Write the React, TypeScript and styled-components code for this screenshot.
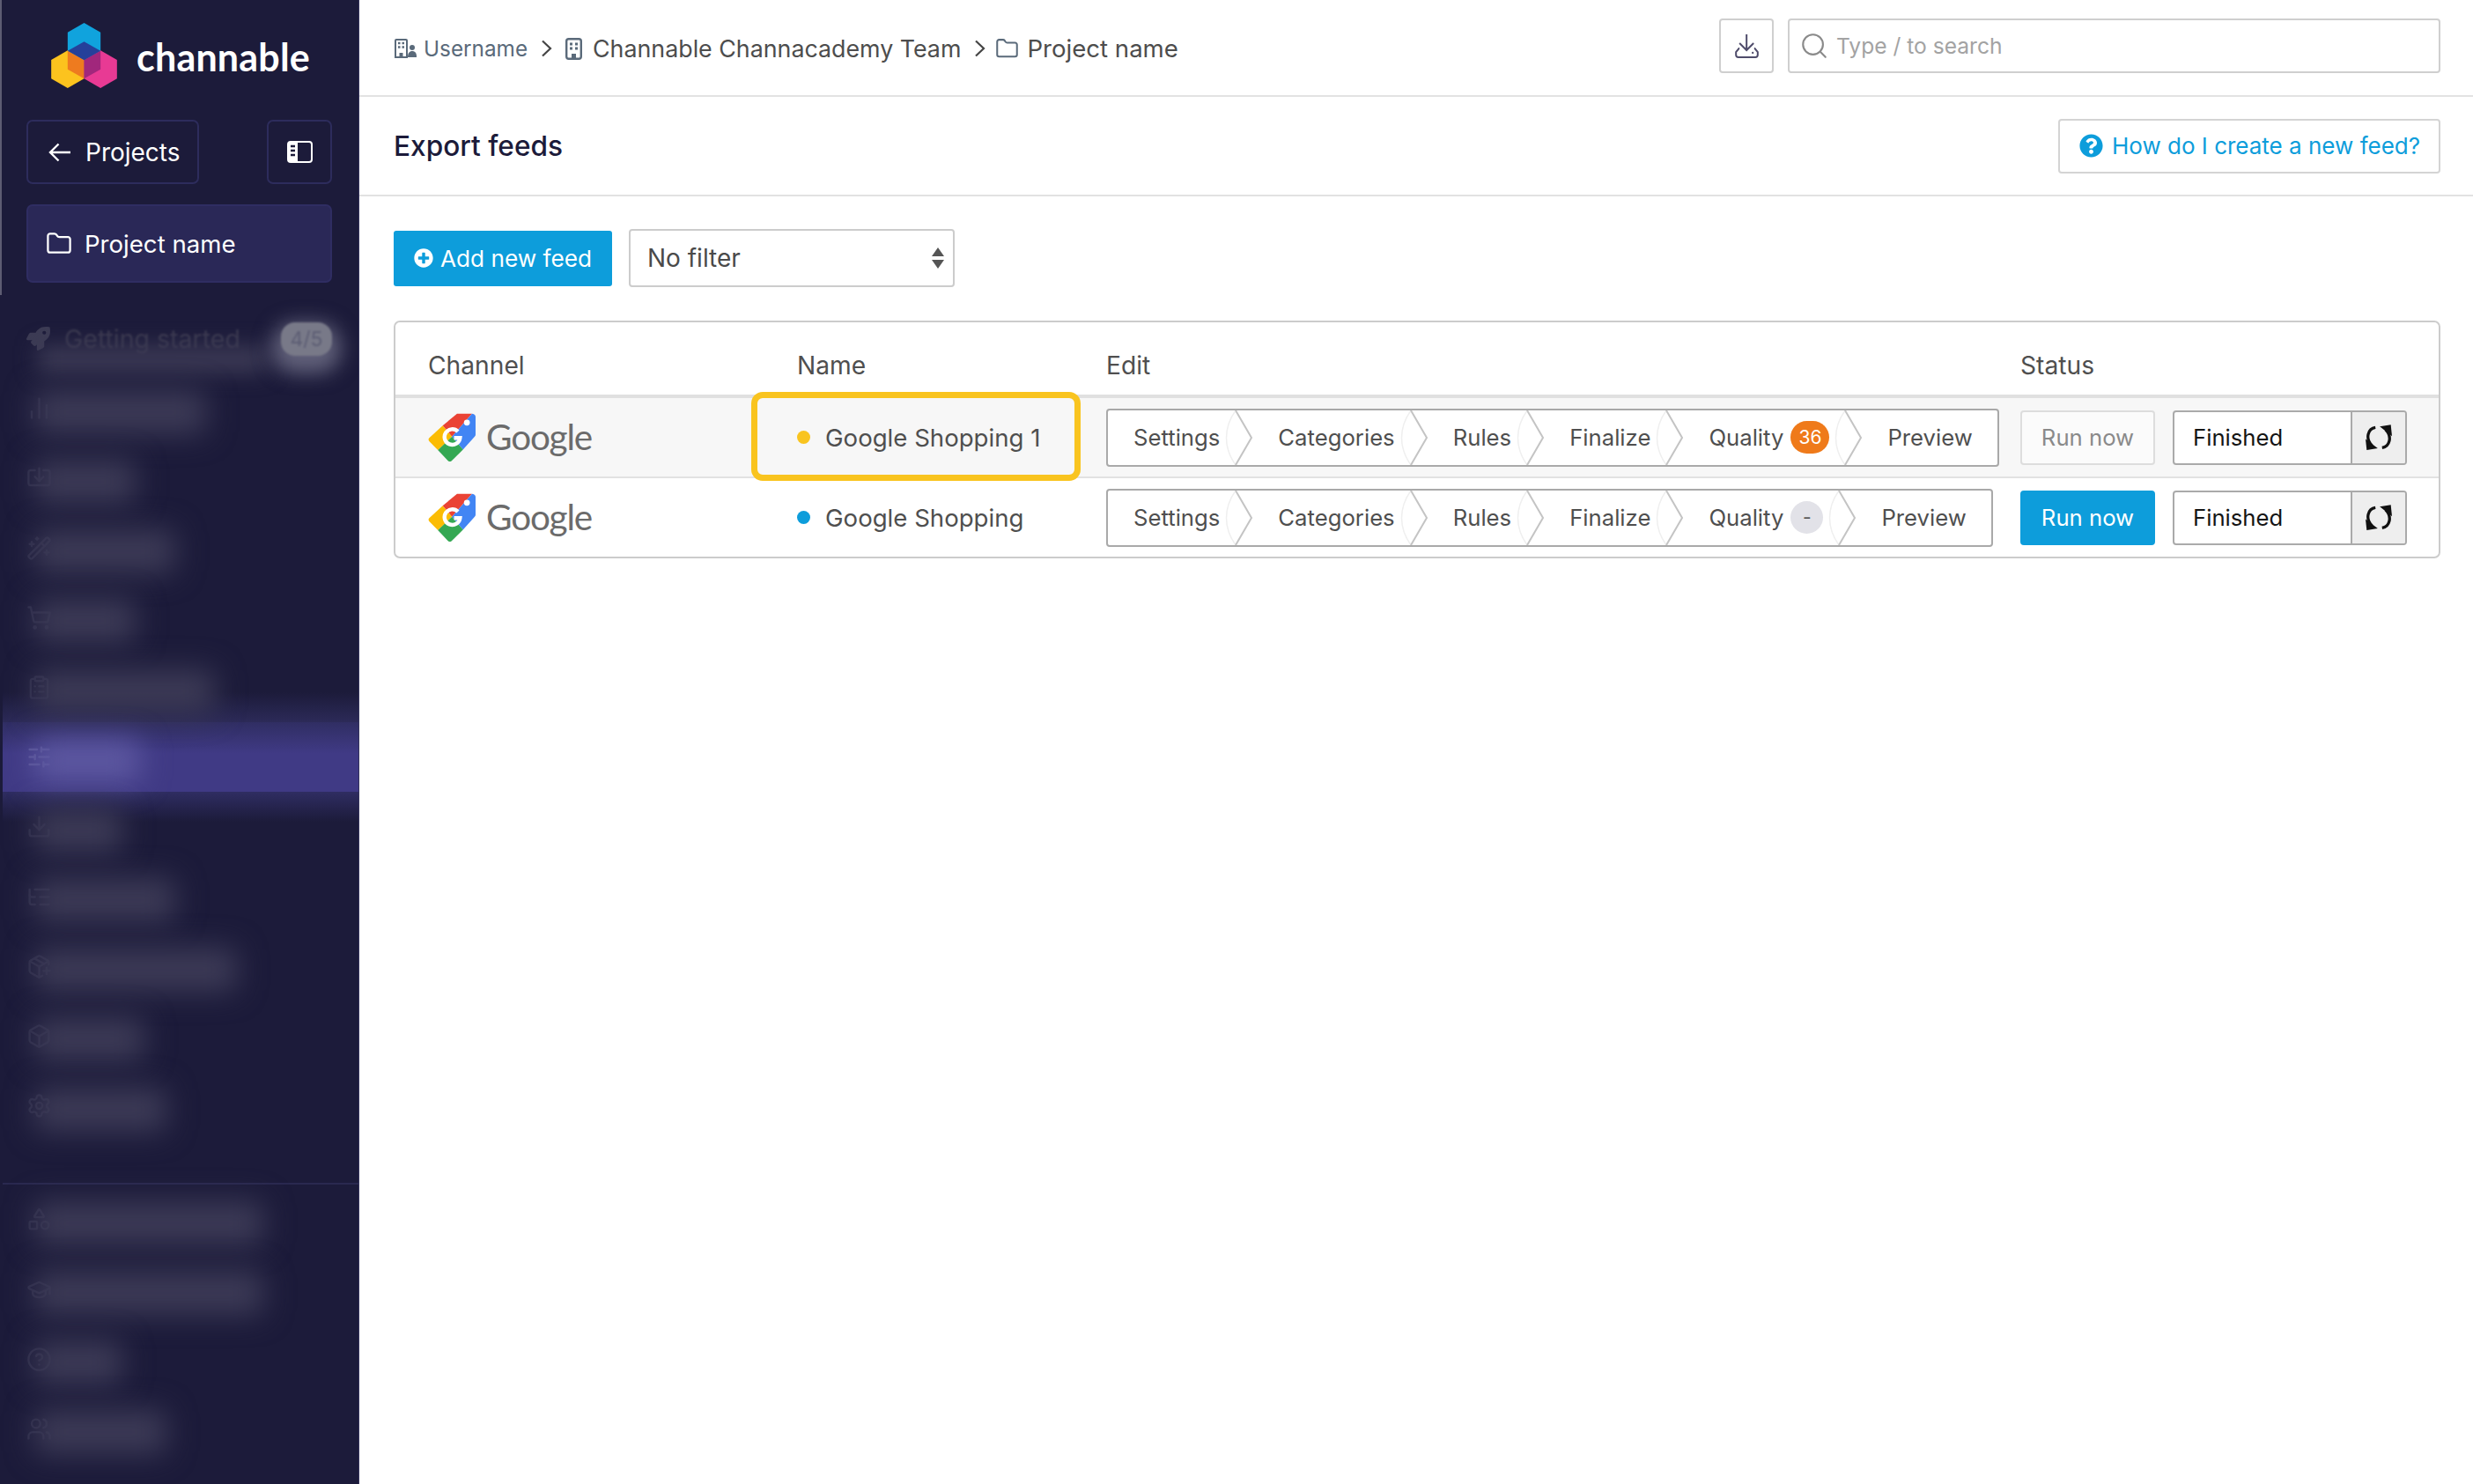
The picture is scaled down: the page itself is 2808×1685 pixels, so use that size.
import React from "react";
import styled, { createGlobalStyle } from "styled-components";
import {
  BarChart2,
  Box,
  ClipboardList,
  GraduationCap,
  HelpCircle,
  Search,
  Settings as Cog,
  Shapes,
  ShoppingCart,
  SlidersHorizontal,
  Download,
  PackagePlus,
  Users,
  WandSparkles,
  ListTree,
  Import,
} from "lucide-react";
import { FaPlusCircle, FaQuestionCircle, FaRocket } from "react-icons/fa";

const GlobalStyle = createGlobalStyle`
  html, body {
    margin: 0;
    padding: 0;
    background: #fff;
  }
  body {
    font-family: Inter, "Liberation Sans", sans-serif;
    font-size: 27.6px;
    color: #4a4a4a;
  }
  * {
    box-sizing: border-box;
  }
`;

const Page = styled.div`
  display: flex;
  width: 2808px;
  height: 1685px;
  overflow: hidden;
`;

/* sidebar */
const Sidebar = styled.aside`
  flex: 0 0 408px;
  display: flex;
  flex-direction: column;
  background: #1c1b3a;
  color: #fff;
  overflow: hidden;
  border-right: 1px solid #34335c;
`;

const SidebarTop = styled.div`
  height: 335px;
  padding: 26px 30px 0 28px;
  border-left: 2px solid #5d5c72;
`;

const Brand = styled.div`
  display: flex;
  align-items: center;
  gap: 22px;
  margin-left: 28px;
  height: 74px;
`;

const BrandName = styled.span`
  font-family: Lato, sans-serif;
  font-size: 43px;
  font-weight: 700;
  letter-spacing: 0.2px;
  margin-top: 2px;
`;

const ProjectsRow = styled.div`
  display: flex;
  justify-content: space-between;
  margin-top: 36px;
`;

const SideButton = styled.div<{ $width: number }>`
  width: ${(p) => p.$width}px;
  height: 73px;
  display: flex;
  align-items: center;
  justify-content: ${(p) => (p.$width < 100 ? "center" : "flex-start")};
  gap: 16px;
  padding-left: ${(p) => (p.$width < 100 ? 0 : 23)}px;
  border: 2px solid #2d2c5c;
  border-radius: 7px;
  font-size: 28px;
`;

const CurrentProject = styled.div`
  height: 89px;
  margin-top: 23px;
  display: flex;
  align-items: center;
  gap: 15px;
  padding-left: 21px;
  background: #2a2857;
  border: 2px solid #2f2d62;
  border-radius: 7px;
`;

const NavList = styled.nav`
  display: flex;
  flex-direction: column;
  padding-top: 10px;
`;

const SecondNavList = styled(NavList)`
  padding-top: 0;
`;

const NavDivider = styled.div`
  height: 2px;
  margin: 48px 0 0 3px;
  background: #2a2950;
`;

const NavRow = styled.div<{ $active?: boolean }>`
  position: relative;
  height: 79.2px;
  display: flex;
  align-items: center;
  padding-left: 30px;
  color: #2f2e4c;
  ${(p) =>
    p.$active &&
    `
    margin-left: 3px;
    padding-left: 27px;
    color: #5b5799;
    background: linear-gradient(#302e63, #403a85 45%, #403a85);
    &::before, &::after {
      content: "";
      position: absolute;
      left: 0;
      right: 0;
      height: 34px;
    }
    &::before {
      bottom: 100%;
      background: linear-gradient(transparent, #2c2a58);
    }
    &::after {
      top: 100%;
      background: linear-gradient(#2f2d62, transparent);
    }
  `}
`;

const BlurBar = styled.span<{ $width: number; $active?: boolean }>`
  position: relative;
  z-index: 1;
  width: ${(p) => p.$width}px;
  height: 50px;
  margin: 8px 0 0 -20px;
  background: ${(p) => (p.$active ? "#5c57a0" : "#3c3a56")};
  border-radius: 8px;
  filter: blur(16px);
`;

const GettingStartedRow = styled(NavRow)`
  color: #3c3b54;
  gap: 16px;
  padding-right: 30px;
`;

const GettingLabel = styled.span`
  position: relative;
  flex: 1;
  font-size: 28.500px;
  color: #3a394f;
  filter: blur(1.3px);
  &::after {
    content: "";
    position: absolute;
    left: -30px;
    right: 0;
    top: 26px;
    height: 30px;
    background: #3c3a55;
    filter: blur(12px);
  }
`;

const ProgressBadge = styled.span`
  width: 58px;
  height: 38px;
  display: flex;
  align-items: center;
  justify-content: center;
  font-size: 23px;
  color: #5d5e74;
  background: #787988;
  border-radius: 16px;
  box-shadow: 0 10px 22px 10px rgba(165, 165, 185, 0.5);
  filter: blur(1.2px);
`;

/* main */
const Main = styled.main`
  flex: 1;
  display: flex;
  flex-direction: column;
  min-width: 0;
`;

const TopBar = styled.header`
  height: 110px;
  flex: none;
  display: flex;
  align-items: center;
  justify-content: space-between;
  padding: 0 37px 4px 39px;
  border-bottom: 2px solid #e2e2e2;
`;

const Breadcrumb = styled.div`
  display: flex;
  align-items: center;
  margin-top: 6px;
`;

const Crumb = styled.span<{ $muted?: boolean; $gap: number }>`
  display: flex;
  align-items: center;
  gap: ${(p) => p.$gap}px;
  font-size: ${(p) => (p.$muted ? 24.3 : 26.8)}px;
  color: ${(p) => (p.$muted ? "#5a6a7a" : "#4d4d4d")};
  white-space: nowrap;
`;

const CrumbArrow = styled.svg`
  flex: none;
  width: 13px;
  height: 20px;
  margin: 0 15px;
`;

const CrumbProject = styled(Crumb)`
  margin-left: -3px;
  font-size: 27.6px;
`;

const TopActions = styled.div`
  display: flex;
  gap: 16px;
`;

const IconBox = styled.div`
  width: 62px;
  height: 62px;
  display: flex;
  align-items: center;
  justify-content: center;
  border: 2px solid #cfcfcf;
  border-radius: 4px;
  color: #4f4c6b;
`;

const SearchBox = styled.div`
  width: 741px;
  height: 62px;
  display: flex;
  align-items: center;
  gap: 8px;
  padding-left: 11px;
  border: 2px solid #cfcfcf;
  border-radius: 4px;
  font-size: 24.6px;
  color: #a3a3a3;
`;

const SectionHeader = styled.div`
  height: 113px;
  flex: none;
  display: flex;
  align-items: center;
  justify-content: space-between;
  padding: 0 37px 0 39px;
  border-bottom: 2px solid #e2e2e2;
`;

const Title = styled.h1`
  margin: 0;
  font-size: 31.6px;
  font-weight: 500;
  color: #1c1b3a;
`;

const HelpButton = styled.a`
  width: 434px;
  height: 62px;
  display: flex;
  align-items: center;
  gap: 10px;
  padding-left: 22px;
  border: 2px solid #d4d4d4;
  border-radius: 4px;
  font-size: 26px;
  color: #0d9ddb;
  white-space: nowrap;
`;

const Content = styled.div`
  padding: 37px 37px 0 39px;
`;

const Toolbar = styled.div`
  display: flex;
  align-items: center;
  gap: 19px;
`;

const AddButton = styled.button`
  width: 248px;
  height: 63px;
  display: flex;
  align-items: center;
  gap: 8px;
  padding: 0 0 0 23px;
  border: 0;
  border-radius: 3px;
  background: #0d9ddb;
  font: inherit;
  font-size: 26.2px;
  color: #fff;
  white-space: nowrap;
`;

const FilterSelect = styled.div`
  width: 370px;
  height: 66px;
  display: flex;
  align-items: center;
  justify-content: space-between;
  padding: 0 9px 0 19px;
  border: 2px solid #cccccc;
  border-radius: 4px;
  font-size: 28px;
  color: #4a4a4a;
`;

const FeedTable = styled.div`
  margin-top: 38px;
  border: 2px solid #cccccc;
  border-radius: 7px;
`;

const TableRow = styled.div<{ $shaded?: boolean }>`
  display: grid;
  grid-template-columns: 456px 351px 1038px 1fr;
  align-items: center;
  height: ${(p) => (p.$shaded ? 91 : 89)}px;
  color: #4f4f4f;
  background: ${(p) => (p.$shaded ? "#f7f7f7" : "transparent")};
  ${(p) => p.$shaded && "border-bottom: 2px solid #e2e2e2;"}
`;

const TableHead = styled(TableRow)`
  height: 86px;
  padding-top: 16px;
  border-bottom: 4px solid #e0e0e0;
  font-size: 28.200px;
`;

const ChannelCell = styled.div`
  display: flex;
  align-items: center;
  gap: 12px;
  padding-left: 37px;
`;

const GoogleWord = styled.span`
  font-family: Lato, sans-serif;
  font-size: 40.500px;
  letter-spacing: -1.2px;
  color: #6b6b6b;
  margin-top: -2px;
`;

const NameCell = styled.div<{ $highlight?: boolean }>`
  position: relative;
  display: flex;
  align-items: center;
  gap: 17px;
  height: 100%;
  ${(p) =>
    p.$highlight &&
    `
    &::after {
      content: "";
      box-sizing: border-box;
      position: absolute;
      left: -52px;
      top: -7px;
      width: 374px;
      height: 101px;
      border: 7px solid #f9c41f;
      border-radius: 13px;
    }
  `}
`;

const StatusDot = styled.span<{ $color: string }>`
  width: 15px;
  height: 15px;
  border-radius: 50%;
  background: ${(p) => p.$color};
`;

const Stepper = styled.div`
  display: inline-flex;
  align-items: center;
  width: max-content;
  height: 66px;
  background: #fff;
  border: 2px solid #a9a9a9;
  border-radius: 4px;
`;

const Step = styled.span<{ $first?: boolean; $last?: boolean }>`
  display: flex;
  align-items: center;
  gap: 8px;
  padding: 0 ${(p) => (p.$last ? 28 : 18)}px 0 ${(p) => (p.$first ? 29 : 28)}px;
  color: #4f4f4f;
  font-size: 25.7px;
`;

const StepChevron = styled.svg`
  flex: none;
  width: 36px;
  height: 62px;
  margin-left: -16px;
`;

const StepBadge = styled.span<{ $empty?: boolean }>`
  min-width: ${(p) => (p.$empty ? 37 : 44)}px;
  height: 37px;
  display: flex;
  align-items: center;
  justify-content: center;
  border-radius: 19px;
  font-size: 21px;
  background: ${(p) => (p.$empty ? "#e2e2e8" : "#ef7a1a")};
  color: ${(p) => (p.$empty ? "#555" : "#fff")};
`;

const StatusCell = styled.div`
  display: flex;
  align-items: center;
  gap: 20px;
`;

const RunButton = styled.button<{ $enabled?: boolean }>`
  width: 153px;
  height: 62px;
  padding: 0;
  border: 2px solid ${(p) => (p.$enabled ? "#0d9ddb" : "#dddddd")};
  border-radius: 4px;
  background: ${(p) => (p.$enabled ? "#0d9ddb" : "#fbfbfb")};
  color: ${(p) => (p.$enabled ? "#fff" : "#8a8a8a")};
  font: inherit;
  font-size: 25.7px;
`;

const StatusGroup = styled.div`
  width: 266px;
  height: 62px;
  display: flex;
  border: 2px solid #aaaaaa;
  border-radius: 4px;
  background: #fff;
  overflow: hidden;
`;

const StatusText = styled.span`
  flex: 1;
  display: flex;
  align-items: center;
  padding-left: 21px;
  font-size: 25.7px;
  color: #151515;
`;

const RefreshAddon = styled.span`
  width: 62px;
  display: flex;
  align-items: center;
  justify-content: center;
  background: #eeeeee;
  border-left: 2px solid #aaaaaa;
`;

/* drawings */
const ChannableLogo = () => (
  <svg width="75" height="74" viewBox="176 78 224 222" aria-hidden>
    <polygon points="288,78 344,110 344,173 288,205 232,173 232,110" fill="#10a3dd" />
    <polygon points="232,172 288,204 288,268 232,300 176,268 176,204" fill="#fcc31e" />
    <polygon points="344,172 400,204 400,268 344,300 288,268 288,204" fill="#e83a94" />
    <polygon points="232,173 288,205 288,268 232,236" fill="#ee7b1f" />
    <polygon points="344,173 288,205 288,268 344,236" fill="#a1277c" />
    <polygon points="288,142 344,173 288,205 232,173" fill="#25409a" />
  </svg>
);

const BackArrow = () => (
  <svg width="26" height="22" viewBox="0 0 26 22" fill="none" stroke="#fff" strokeWidth="2.400" aria-hidden>
    <path d="M25 11H2M11.500 1.500L2 11l9.500 9.500" />
  </svg>
);

const FolderIcon = ({ size, color }: { size: number; color: string }) => (
  <svg width={size} height={size * 0.9} viewBox="1 2 22 20" fill="none" stroke={color} strokeWidth="1.800" aria-hidden>
    <path d="M20 20a2 2 0 0 0 2-2V8a2 2 0 0 0-2-2h-7.900a2 2 0 0 1-1.690-.9L9.600 3.900A2 2 0 0 0 7.930 3H4a2 2 0 0 0-2 2v13a2 2 0 0 0 2 2Z" />
  </svg>
);

const PanelIcon = () => (
  <svg width="29" height="25" viewBox="0 0 29 25" aria-hidden>
    <rect x="1" y="1" width="27" height="23" rx="3" fill="none" stroke="#fff" strokeWidth="2" />
    <path d="M3 1h9v23H3a2 2 0 0 1-2-2V3a2 2 0 0 1 2-2z" fill="#fff" />
    <path d="M4 6h5M4 11h5M4 16h5" stroke="#1c1b3a" strokeWidth="2.400" />
  </svg>
);

const TeamIcon = () => (
  <svg width="26" height="22" viewBox="0 0 26 22" fill="none" stroke="#5a6a7a" aria-hidden>
    <path d="M2 21V2a1 1 0 0 1 1-1h11a1 1 0 0 1 1 1v19z" strokeWidth="2" />
    <path d="M5 5h2.500M9.500 5H12M5 9.500h2.500M9.500 9.500H12" strokeWidth="2.400" />
    <path d="M6.500 21v-5h4v5z" fill="#5a6a7a" stroke="none" />
    <circle cx="21" cy="10" r="3" fill="#5a6a7a" stroke="none" />
    <path d="M16 21c0-5 2-7 5-7s5 2 5 6v1z" fill="#5a6a7a" stroke="none" />
  </svg>
);

const BuildingIcon = () => (
  <svg width="19" height="25" viewBox="0 0 19 25" fill="none" stroke="#5a6a7a" aria-hidden>
    <rect x="1.200" y="1.200" width="16.600" height="22.600" rx="2.500" strokeWidth="2.400" />
    <path d="M5 7h3M11 7h3M5 12h3M11 12h3" strokeWidth="3" />
    <path d="M7 24v-6h5v6z" fill="#5a6a7a" stroke="none" />
  </svg>
);

const CrumbChevron = () => (
  <CrumbArrow viewBox="0 0 13 20" fill="none" stroke="#444" strokeWidth="2.200" aria-hidden>
    <path d="M2 1.500L11 10l-9 8.500" />
  </CrumbArrow>
);

const TrayDownload = () => (
  <svg width="27" height="28" viewBox="45 27 80 84" fill="none" stroke="#4f4c6b" strokeWidth="6" aria-hidden>
    <path d="M84 30V84M60 60L84 84L108 60" />
    <path d="M60 78H58L48 90V100a8 8 0 0 0 8 8h58a8 8 0 0 0 8-8V90L112 78h-2" />
    <circle cx="105" cy="93" r="3.500" fill="#4f4c6b" stroke="none" />
  </svg>
);

const SelectArrows = () => (
  <svg width="16" height="24" viewBox="0 0 16 24" aria-hidden>
    <path d="M8 0l7 10H1zM8 24L1 14h14z" fill="#555" />
  </svg>
);

const GoogleTag = () => (
  <svg width="54" height="55" viewBox="48 43 159 162" aria-hidden>
    <path d="M97 85L145 45h50L128 122z" fill="#ea4335" />
    <path d="M195 45c6 0 12 4 12 10v60c0 3-1 5-3 7l-39 43-37-43z" fill="#4285f4" />
    <path d="M97 85l31 37-47 45-29-30c-3-3-3-8 0-11z" fill="#fbbc04" />
    <path d="M128 122l37 43-38 38c-4 3-8 3-12 0L81 167z" fill="#34a853" />
    <circle cx="178" cy="75" r="10" fill="#fff" />
    <path d="M148 105a26 26 0 1 0 7 21h-20" fill="none" stroke="#fff" strokeWidth="13" />
  </svg>
);

const RefreshIcon = () => (
  <svg width="30" height="29" viewBox="46 36 91 88" fill="none" aria-hidden>
    <path d="M80 46C54 50 44 84 68 108" stroke="#111" strokeWidth="10" />
    <polygon points="46,86 50,124 88,118" fill="#111" />
    <path d="M103 116C129 112 139 78 115 54" stroke="#111" strokeWidth="10" />
    <polygon points="95,43 133,37 137,76" fill="#111" />
  </svg>
);

const ChevronDivider = () => (
  <StepChevron viewBox="0 0 36 62" fill="none" aria-hidden>
    <path d="M16 0C2 20 2 42 16 62" stroke="#efefef" strokeWidth="1.500" />
    <path d="M16 0l18 31-18 31" stroke="#c4c4c4" strokeWidth="2" />
  </StepChevron>
);

type NavItem = { icon: React.ElementType; width: number; active?: boolean };

const mainNav: NavItem[] = [
  { icon: BarChart2, width: 195 },
  { icon: Import, width: 115 },
  { icon: WandSparkles, width: 160 },
  { icon: ShoppingCart, width: 115 },
  { icon: ClipboardList, width: 205 },
  { icon: SlidersHorizontal, width: 120, active: true },
  { icon: Download, width: 100 },
  { icon: ListTree, width: 160 },
  { icon: PackagePlus, width: 230 },
  { icon: Box, width: 125 },
  { icon: Cog, width: 150 },
];

const secondNav: NavItem[] = [
  { icon: Shapes, width: 260 },
  { icon: GraduationCap, width: 260 },
  { icon: HelpCircle, width: 100 },
  { icon: Users, width: 150 },
];

const renderNav = (items: NavItem[]) =>
  items.map((item, i) => {
    const Icon = item.icon;
    return (
      <NavRow key={i} $active={item.active}>
        <Icon size={29} strokeWidth={2} style={{ flex: "none" }} />
        <BlurBar $width={item.width} $active={item.active} />
      </NavRow>
    );
  });

type Feed = {
  name: string;
  dot: string;
  quality: string;
  canRun: boolean;
  shaded: boolean;
};

const feeds: Feed[] = [
  { name: "Google Shopping 1", dot: "#f9c41f", quality: "36", canRun: false, shaded: true },
  { name: "Google Shopping", dot: "#0d9ddb", quality: "-", canRun: true, shaded: false },
];

const steps = ["Settings", "Categories", "Rules", "Finalize"];

function FeedRow({ feed }: { feed: Feed }) {
  return (
    <TableRow $shaded={feed.shaded}>
      <ChannelCell>
        <GoogleTag />
        <GoogleWord>Google</GoogleWord>
      </ChannelCell>
      <NameCell $highlight={feed.shaded}>
        <StatusDot $color={feed.dot} />
        {feed.name}
      </NameCell>
      <div>
        <Stepper>
          {steps.map((s, i) => (
            <React.Fragment key={s}>
              <Step $first={i === 0}>{s}</Step>
              <ChevronDivider />
            </React.Fragment>
          ))}
          <Step>
            Quality
            <StepBadge $empty={feed.quality === "-"}>{feed.quality}</StepBadge>
          </Step>
          <ChevronDivider />
          <Step $last>Preview</Step>
        </Stepper>
      </div>
      <StatusCell>
        <RunButton $enabled={feed.canRun}>Run now</RunButton>
        <StatusGroup>
          <StatusText>Finished</StatusText>
          <RefreshAddon>
            <RefreshIcon />
          </RefreshAddon>
        </StatusGroup>
      </StatusCell>
    </TableRow>
  );
}

export default function App() {
  return (
    <Page>
      <GlobalStyle />
      <Sidebar>
        <SidebarTop>
          <Brand>
            <ChannableLogo />
            <BrandName>channable</BrandName>
          </Brand>
          <ProjectsRow>
            <SideButton $width={196}>
              <BackArrow />
              Projects
            </SideButton>
            <SideButton $width={74}>
              <PanelIcon />
            </SideButton>
          </ProjectsRow>
          <CurrentProject>
            <FolderIcon size={28} color="#fff" />
            Project name
          </CurrentProject>
        </SidebarTop>
        <NavList>
          <GettingStartedRow>
            <FaRocket size={27} />
            <GettingLabel>Getting started</GettingLabel>
            <ProgressBadge>4/5</ProgressBadge>
          </GettingStartedRow>
          {renderNav(mainNav)}
        </NavList>
        <NavDivider />
        <SecondNavList>{renderNav(secondNav)}</SecondNavList>
      </Sidebar>
      <Main>
        <TopBar>
          <Breadcrumb>
            <Crumb $muted $gap={8}>
              <TeamIcon />
              Username
            </Crumb>
            <CrumbChevron />
            <Crumb $gap={12}>
              <BuildingIcon />
              Channable Channacademy Team
            </Crumb>
            <CrumbChevron />
            <CrumbProject $gap={10}>
              <FolderIcon size={25} color="#5a6a7a" />
              Project name
            </CrumbProject>
          </Breadcrumb>
          <TopActions>
            <IconBox>
              <TrayDownload />
            </IconBox>
            <SearchBox>
              <Search size={34} strokeWidth={1.5} color="#8a8a8a" />
              Type / to search
            </SearchBox>
          </TopActions>
        </TopBar>
        <SectionHeader>
          <Title>Export feeds</Title>
          <HelpButton>
            <FaQuestionCircle size={27} />
            How do I create a new feed?
          </HelpButton>
        </SectionHeader>
        <Content>
          <Toolbar>
            <AddButton>
              <FaPlusCircle size={22} />
              Add new feed
            </AddButton>
            <FilterSelect>
              No filter
              <SelectArrows />
            </FilterSelect>
          </Toolbar>
          <FeedTable>
            <TableHead>
              <ChannelCell>Channel</ChannelCell>
              <div>Name</div>
              <div>Edit</div>
              <div>Status</div>
            </TableHead>
            {feeds.map((f) => (
              <FeedRow key={f.name} feed={f} />
            ))}
          </FeedTable>
        </Content>
      </Main>
    </Page>
  );
}
